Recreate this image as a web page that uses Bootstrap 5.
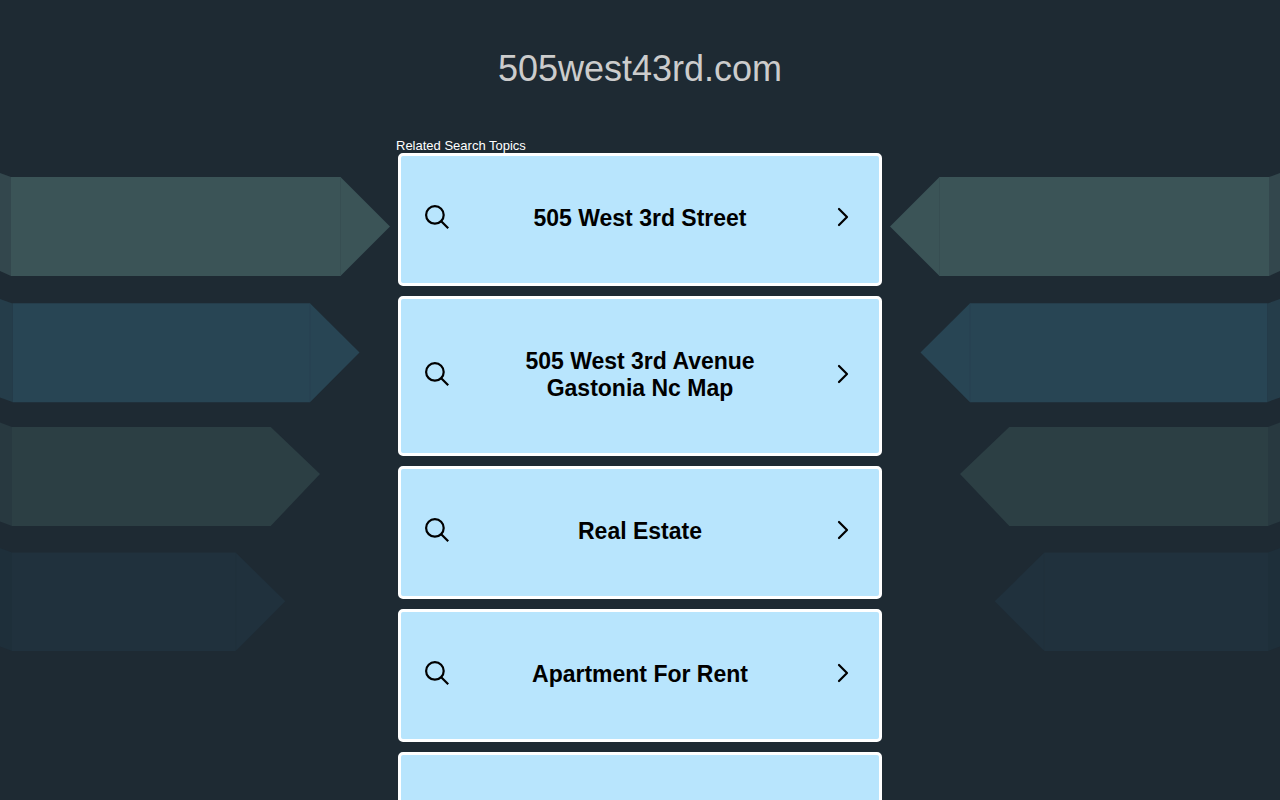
<!DOCTYPE html>
<html lang="en">
<head>
<meta charset="utf-8">
<meta name="viewport" content="width=device-width, initial-scale=1">
<title>505west43rd.com</title>
<link href="https://cdn.jsdelivr.net/npm/bootstrap@5.3.0/dist/css/bootstrap.min.css" rel="stylesheet">
<style>
  body { background: #1e2a33; font-family: "Liberation Sans", Arial, sans-serif; }
  .backdrop { height: 800px; z-index: -1; }
  .site-title { font-size: 36px; line-height: 42px; color: #ccc; padding: 48px 0; }
  .topics { max-width: 484px; }
  .topics-label { font-size: 13px; line-height: 15px; color: #fff; margin-left: -2px; }
  .topic-list { gap: 10px; }
  .topic { background: #b8e5fd; border: 3px solid #fff; border-radius: 5px; padding: 50px 24px; color: #000; font-size: 23px; line-height: 27px; }
  .topic:hover { color: #000; background: #a4dcfa; }
  .topic-text { max-width: 260px; margin-top: -1px; margin-bottom: 1px; }
  .topic-icon { margin-top: -1px; margin-bottom: 4px; }
</style>
</head>
<body>
<svg class="backdrop position-absolute top-0 start-0 w-100" viewBox="0 0 1280 800" preserveAspectRatio="xMidYMin slice" aria-hidden="true">
  <defs>
    <g id="ribbons">
      <path fill="#33474d" d="M0 173 11 177V276L0 271z"/>
      <path fill="#3b5457" d="M11 177H340.500L390 226.500 340.500 276H11z"/>
      <path fill="#253d4a" d="M0 299 12.500 303.500V402L0 397.500z"/>
      <path fill="#284554" d="M12.500 303.300H310L359.500 352.500 310 402.200H12.500z"/>
      <path fill="#283940" d="M0 422.500 12 427V526L0 521.500z"/>
      <path fill="#2c3f44" d="M12 427H270.700L320 474 270.700 526H12z"/>
      <path fill="#1e2f3a" d="M0 548 12 552.500V651L0 646.500z"/>
      <path fill="#20313d" d="M12 552.500H235.700L285.300 601.300 235.700 651H12z"/>
      <path fill="none" stroke="#1e2a33" stroke-opacity=".12" d="M340.500 178V275M310 304V402M235.700 553V651"/>
    </g>
  </defs>
  <use href="#ribbons"/>
  <use href="#ribbons" transform="translate(1280 0) scale(-1 1)"/>
</svg>
<svg class="d-none" aria-hidden="true">
  <symbol id="search" viewBox="0 0 24 24"><g fill="none" stroke="currentColor" stroke-width="2.200"><circle cx="9.900" cy="9.900" r="8.800"/><path d="M16.200 16.200 23.200 23.200"/></g></symbol>
  <symbol id="chevron" viewBox="0 0 12 24"><path fill="none" stroke="currentColor" stroke-width="2.200" stroke-linecap="round" stroke-linejoin="round" d="M2 4 10 12 2 20"/></symbol>
</svg>

<header>
  <h1 class="site-title text-center fw-normal m-0">505west43rd.com</h1>
</header>
<main class="topics mx-auto">
  <h2 class="topics-label fw-normal mb-0">Related Search Topics</h2>
  <nav class="topic-list d-flex flex-column pb-5" aria-label="Related Search Topics">
    <a class="topic d-flex align-items-center justify-content-between text-decoration-none fw-bold text-center" href="#"><svg class="topic-icon flex-shrink-0" width="24" height="24"><use href="#search"/></svg><span class="topic-text">505 West 3rd Street</span><svg class="topic-icon flex-shrink-0" width="24" height="24"><use href="#chevron"/></svg></a>
    <a class="topic d-flex align-items-center justify-content-between text-decoration-none fw-bold text-center" href="#"><svg class="topic-icon flex-shrink-0" width="24" height="24"><use href="#search"/></svg><span class="topic-text">505 West 3rd Avenue Gastonia Nc Map</span><svg class="topic-icon flex-shrink-0" width="24" height="24"><use href="#chevron"/></svg></a>
    <a class="topic d-flex align-items-center justify-content-between text-decoration-none fw-bold text-center" href="#"><svg class="topic-icon flex-shrink-0" width="24" height="24"><use href="#search"/></svg><span class="topic-text">Real Estate</span><svg class="topic-icon flex-shrink-0" width="24" height="24"><use href="#chevron"/></svg></a>
    <a class="topic d-flex align-items-center justify-content-between text-decoration-none fw-bold text-center" href="#"><svg class="topic-icon flex-shrink-0" width="24" height="24"><use href="#search"/></svg><span class="topic-text">Apartment For Rent</span><svg class="topic-icon flex-shrink-0" width="24" height="24"><use href="#chevron"/></svg></a>
    <a class="topic d-flex align-items-center justify-content-between text-decoration-none fw-bold text-center" href="#" aria-label="More topics"><svg class="topic-icon flex-shrink-0" width="24" height="24"><use href="#search"/></svg><svg class="topic-icon flex-shrink-0" width="24" height="24"><use href="#chevron"/></svg></a>
  </nav>
</main>
<script src="https://cdn.jsdelivr.net/npm/bootstrap@5.3.0/dist/js/bootstrap.bundle.min.js"></script>
</body>
</html>
